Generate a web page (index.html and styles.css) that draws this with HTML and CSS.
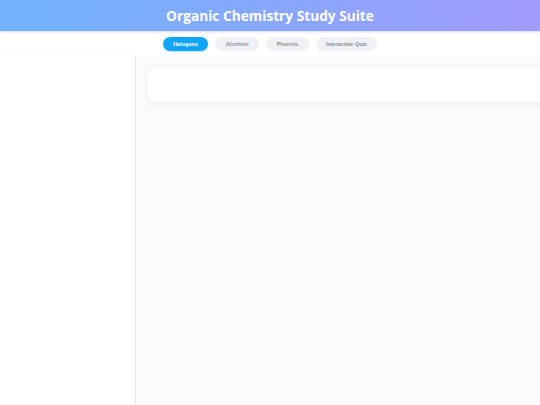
FILE: index.html
```html
<!DOCTYPE html>
<html lang="en">
<head>
<meta charset="utf-8">
<title>Organic Chemistry Study Suite</title>
<link rel="stylesheet" href="styles.css">
</head>
<body>
<header class="topbar">
  <h1 class="title">Organic Chemistry Study Suite</h1>
</header>
<nav class="tabs">
  <button class="tab active">Halogens</button>
  <button class="tab">Alcohols</button>
  <button class="tab">Phenols</button>
  <button class="tab">Interactive Quiz</button>
</nav>
<div class="layout">
  <aside class="sidebar"></aside>
  <main class="content">
    <section class="card"></section>
  </main>
</div>
</body>
</html>
```
FILE: styles.css
```css
* { box-sizing: border-box; }
html, body { margin: 0; padding: 0; height: 100%; }
body {
  font-family: "Liberation Sans", Arial, sans-serif;
  background: #ffffff;
  overflow: hidden;
  display: flex;
  flex-direction: column;
}
.topbar {
  height: 31px;
  background: linear-gradient(100deg, #70b4fb 0%, #8aa6fc 55%, #a39bfd 100%);
  display: flex;
  align-items: center;
  justify-content: center;
  box-shadow: 0 1px 2px rgba(120, 140, 250, 0.35);
  position: relative;
  z-index: 2;
}
.title {
  margin: 0;
  color: #ffffff;
  font-family: "Open Sans", sans-serif;
  font-weight: 700;
  font-size: 13.7px;
  letter-spacing: 0;
}
.tabs {
  height: 25px;
  display: flex;
  justify-content: center;
  align-items: center;
  gap: 7px;
  padding-top: 1px;
  background: #ffffff;
}
.tab {
  border: none;
  height: 14px;
  padding: 0 10.4px;
  border-radius: 8px;
  background: #f0f1f4;
  color: #8a8f99;
  font-family: "Liberation Sans", Arial, sans-serif;
  font-weight: 700;
  font-size: 5.5px;
  line-height: 14px;
}
.tab.active {
  background: #10a5f5;
  color: #ffffff;
  box-shadow: 0 1px 2px rgba(16, 165, 245, 0.3);
}
.layout {
  flex: 1;
  display: flex;
}
.sidebar {
  width: 136px;
  background: #ffffff;
  border-right: 1px solid #e6e6e6;
  box-shadow: 1px 0 4px rgba(0, 0, 0, 0.03);
}
.content {
  flex: 1;
  background: #fafafa;
  padding: 12px 0 0 12px;
  overflow: hidden;
}
.card {
  height: 34px;
  width: 420px;
  background: #ffffff;
  border-radius: 6px;
  box-shadow: 0 2px 6px rgba(0, 0, 0, 0.05);
}
```
